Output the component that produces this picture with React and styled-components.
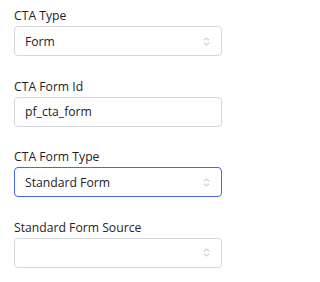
import React from "react";
import styled, { createGlobalStyle } from "styled-components";

const Global = createGlobalStyle`
  body {
    margin: 0;
    background: #ffffff;
    font-family: "Open Sans", "Noto Sans", sans-serif;
  }
`;

const Panel = styled.div`
  box-sizing: border-box;
  width: 231px;
  display: flex;
  flex-direction: column;
  gap: 22.5px;
  padding: 8px 9px 0 14px;
`;

const Field = styled.div`
  display: flex;
  flex-direction: column;
  gap: 2px;
`;

const Label = styled.label`
  font-size: 12.2px;
  line-height: 16px;
  color: #1f2328;
`;

const Box = styled.div`
  box-sizing: border-box;
  height: 30px;
  display: flex;
  align-items: center;
  justify-content: space-between;
  padding: 0 11px 0 10px;
  border: 1px solid ${(p) => (p.$focused ? "#4a63f0" : "#d5d8dc")};
  border-radius: 4px;
  font-size: 12.2px;
  color: #1f2328;
  background: #fff;
`;

const Chevrons = () => (
  <svg width="7" height="9" viewBox="0 0 7 9" fill="none">
    <path d="M1 3.2L3.5 1L6 3.2" stroke="#b4b8bd" strokeWidth="1" />
    <path d="M1 5.8L3.5 8L6 5.8" stroke="#b4b8bd" strokeWidth="1" />
  </svg>
);

const fields = [
  { label: "CTA Type", value: "Form", select: true },
  { label: "CTA Form Id", value: "pf_cta_form" },
  { label: "CTA Form Type", value: "Standard Form", select: true, focused: true },
  { label: "Standard Form Source", value: "", select: true },
];

export default function App() {
  return (
    <>
      <Global />
      <Panel>
        {fields.map((f) => (
          <Field key={f.label}>
            <Label>{f.label}</Label>
            <Box $focused={f.focused}>
              <span>{f.value}</span>
              {f.select && <Chevrons />}
            </Box>
          </Field>
        ))}
      </Panel>
    </>
  );
}
